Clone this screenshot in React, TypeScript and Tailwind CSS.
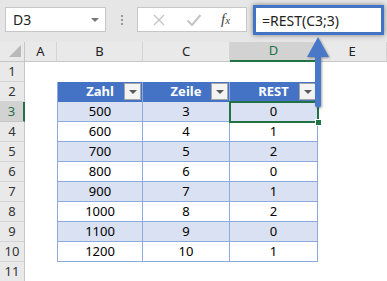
import React from "react";

const cols = ["A", "B", "C", "D", "E"];
const data = [
  [500, 3, 0],
  [600, 4, 1],
  [700, 5, 2],
  [800, 6, 0],
  [900, 7, 1],
  [1000, 8, 2],
  [1100, 9, 0],
  [1200, 10, 1],
];

function DropBtn() {
  return (
    <div className="absolute right-[1px] top-[1px] w-[17px] h-[17px] bg-[#f3f3f3] border border-[#a6a6a6] flex items-center justify-center">
      <div className="w-0 h-0 border-l-[4px] border-r-[4px] border-t-[4px] border-l-transparent border-r-transparent border-t-[#595959]" />
    </div>
  );
}

function RowHead({ n, active }: { n: number; active?: boolean }) {
  return (
    <div
      className={
        active
          ? "h-[20px] flex items-center justify-center bg-[#d2d2d2] text-[#217346] border-b border-[#c6c6c6] border-r-2 border-r-[#217346] text-[13px]"
          : "h-[20px] flex items-center justify-center bg-[#e9e9e9] text-[#333] border-b border-[#d4d4d4] border-r border-r-[#c6c6c6] text-[13px]"
      }
    >
      {n}
    </div>
  );
}

export default function App() {
  return (
    <div className="relative w-[387px] h-[281px] overflow-hidden bg-white font-['Noto_Sans',sans-serif] text-black">
      {/* formula toolbar */}
      <div className="h-[42px] bg-[#e6e6e6] flex items-start pt-[7px] pl-[5px]">
        <div className="w-[101px] h-[25px] bg-white border border-[#c6c6c6] flex items-center justify-between pl-[7px] pr-[6px] text-[14px] text-[#222]">
          <span>D3</span>
          <div className="w-0 h-0 border-l-[4px] border-r-[4px] border-t-[4px] border-l-transparent border-r-transparent border-t-[#777]" />
        </div>
        <div className="w-[31px] h-[25px] flex flex-col items-center justify-center gap-[2px]">
          <div className="w-[2px] h-[2px] bg-[#9a9a9a]" />
          <div className="w-[2px] h-[2px] bg-[#9a9a9a]" />
          <div className="w-[2px] h-[2px] bg-[#9a9a9a]" />
        </div>
        <div className="w-[110px] h-[25px] bg-white border border-[#c6c6c6] flex items-center text-[#c2c2c2]">
          <svg width="14" height="14" viewBox="0 0 14 14" className="ml-[14px]">
            <path d="M2 2 L12 12 M12 2 L2 12" stroke="#c4c4c4" strokeWidth="1.4" fill="none" />
          </svg>
          <svg width="16" height="14" viewBox="0 0 16 14" className="ml-[20px]">
            <path d="M1.5 7.5 L6 12 L14.5 2" stroke="#c4c4c4" strokeWidth="2" fill="none" />
          </svg>
          <span className="ml-[19px] font-['Liberation_Serif',serif] italic text-[15px] text-[#444] leading-none">
            f<span className="text-[11px]">x</span>
          </span>
        </div>
        <div className="ml-[6px] -mt-[2px] w-[131px] h-[30px] bg-white border-[3px] border-[#4472c4] shadow-[0_0_5px_rgba(0,0,0,0.45)] flex items-center pl-[6px] text-[14px] text-[#222]">
          =REST(C3;3)
        </div>
      </div>

      {/* sheet grid */}
      <div className="grid grid-cols-[25px_32px_86px_87px_88px_1fr]">
        {/* column headers */}
        <div className="h-[20px] bg-[#e9e9e9] border-b border-r border-[#c6c6c6] flex items-end justify-end pr-[3px] pb-[4px]">
          <svg width="12" height="12" viewBox="0 0 12 12">
            <path d="M12 0 L12 12 L0 12 Z" fill="#b9b9b9" />
          </svg>
        </div>
        {cols.map((c) =>
          c === "D" ? (
            <div key={c} className="h-[20px] bg-[#d2d2d2] text-[#217346] border-r border-[#c6c6c6] border-b-2 border-b-[#217346] flex items-center justify-center text-[13px]">
              {c}
            </div>
          ) : (
            <div key={c} className="h-[20px] bg-[#e9e9e9] text-[#222] border-r border-[#d4d4d4] border-b border-b-[#c6c6c6] flex items-center justify-center text-[13px]">
              {c}
            </div>
          )
        )}

        {/* row 1 */}
        <RowHead n={1} />
        <div className="col-span-5" />

        {/* row 2: table header */}
        <RowHead n={2} />
        <div />
        {["Zahl", "Zeile", "REST"].map((h, i) => (
          <div
            key={h}
            className={
              i === 0
                ? "relative h-[20px] bg-[#4472c4] text-white font-bold text-[13px] flex items-center justify-center border-l border-r border-l-[#8ea9db] border-r-[#8ea9db]"
                : "relative h-[20px] bg-[#4472c4] text-white font-bold text-[13px] flex items-center justify-center border-r border-r-[#8ea9db]"
            }
          >
            {h}
            <DropBtn />
          </div>
        ))}
        <div />

        {/* data rows */}
        {data.map((r, ri) => (
          <React.Fragment key={ri}>
            <RowHead n={ri + 3} active={ri === 0} />
            <div />
            {r.map((v, ci) => (
              <div
                key={ci}
                className={
                  (ri % 2 === 0 ? "bg-[#d9e1f2] " : "bg-white ") +
                  (ci === 0
                    ? "h-[20px] flex items-center justify-center text-[13px] border-b border-r border-l border-[#8ea9db]"
                    : "h-[20px] flex items-center justify-center text-[13px] border-b border-r border-[#8ea9db]")
                }
              >
                {v}
              </div>
            ))}
            <div />
          </React.Fragment>
        ))}

        {/* row 11 */}
        <RowHead n={11} />
        <div className="col-span-5" />
      </div>

      {/* selection on D3 */}
      <div className="absolute left-[229px] top-[101px] w-[90px] h-[22px] border-2 border-[#217346]" />
      <div className="absolute left-[315px] top-[119px] w-[7px] h-[7px] bg-[#217346] border border-white" />

      {/* arrow pointing to the formula bar */}
      <svg
        className="absolute left-[300px] top-[34px] drop-shadow-[1px_1px_1px_rgba(0,0,0,0.35)]"
        width="36"
        height="80"
        viewBox="0 0 36 80"
      >
        <path d="M18 3 L29 23 L21 23 L21 72 Q18 75 15 72 L15 23 L7 23 Z" fill="#4a78c9" />
      </svg>
    </div>
  );
}
